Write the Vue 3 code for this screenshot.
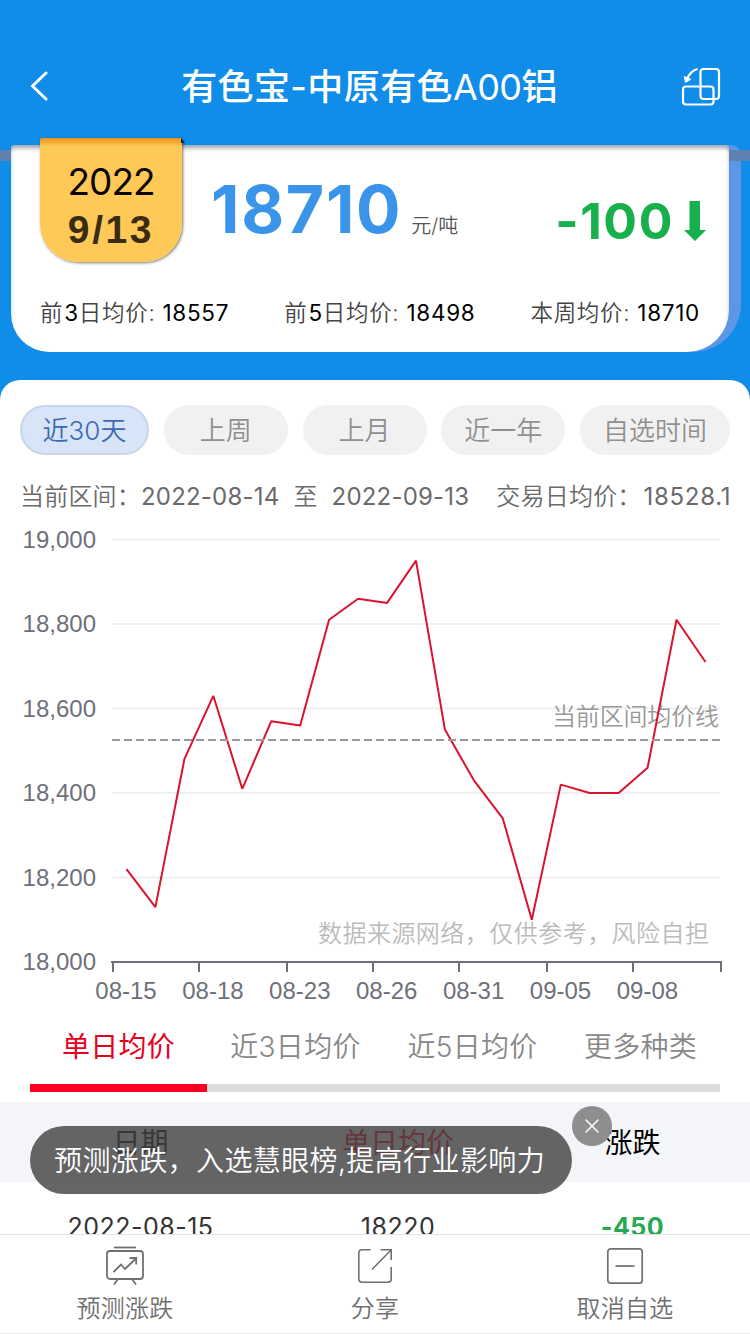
<template>
  <div class="page">
    <header class="nav">
      <button class="nav-btn" aria-label="返回">
        <svg width="20" height="32" viewBox="0 0 20 32" fill="none" stroke="currentColor" stroke-width="3" stroke-linecap="round" stroke-linejoin="round">
          <polyline points="16 2 2.500 15 16 28"/>
        </svg>
      </button>
      <h1 class="nav-title">有色宝-中原有色<span class="latin">A00</span>铝</h1>
      <button class="nav-btn" aria-label="旋转屏幕">
        <svg width="40" height="40" viewBox="0 0 40 40" fill="none" stroke="currentColor" stroke-width="2.2">
          <rect x="19.5" y="2" width="18.5" height="30" rx="3"/>
          <rect x="2" y="19.5" width="30.5" height="18" rx="3"/>
          <path d="M16.5 2C11.500 3.500 8 7 6 12"/>
          <path d="M3.200 9.500L4.600 15.500L9.800 12.200Z" fill="currentColor" stroke-width="1"/>
        </svg>
      </button>
    </header>

    <section class="quote">
      <div class="slot"></div>
      <div class="card-back">
        <div class="card">
          <div class="card-main">
            <div class="date-tag">
              <span class="year">2022</span>
              <span class="day">9/13</span>
            </div>
            <div class="price">18710</div>
            <div class="unit">元/吨</div>
            <div class="change">
              <span>-100</span>
              <svg width="22" height="40" viewBox="0 0 22 40" fill="currentColor">
                <path d="M5.500 0H16V29H22L11 40L0 29H5.500Z"/>
              </svg>
            </div>
          </div>
          <div class="averages">
            <span v-for="a in averages" :key="a.value" class="avg">
              {{ a.pre }}<b v-if="a.days" class="days">{{ a.days }}</b>{{ a.post }} <b>{{ a.value }}</b>
            </span>
          </div>
        </div>
      </div>
    </section>

    <main class="panel">
      <div class="ranges">
        <button
          v-for="(r, i) in ranges"
          :key="r"
          class="range"
          :class="{ active: i === activeRange, wide: i === ranges.length - 1 }"
          @click="activeRange = i"
        >{{ r }}</button>
      </div>

      <div class="interval">
        <span class="cn">当前区间：</span>
        <span class="num">2022-08-14</span>
        <span class="cn to">至</span>
        <span class="num">2022-09-13</span>
        <span class="cn mean">交易日均价：</span>
        <span class="num mean-value">18528.1</span>
      </div>

      <svg class="chart" width="750" height="500" viewBox="0 0 750 500">
        <g v-for="t in yTicks" :key="t">
          <line v-if="t > 18000" x1="112" x2="720" :y1="yPos(t)" :y2="yPos(t)" class="grid"/>
          <text x="96" :y="yPos(t) + 8" text-anchor="end" class="axis-label">{{ t.toLocaleString('en-US') }}</text>
        </g>
        <path :d="axisPath" class="axis"/>
        <text v-for="(d, i) in dates" :key="d" :x="126 + i * 86.900" y="487" text-anchor="middle" class="axis-label">{{ d }}</text>
        <text x="552" y="213" textLength="167" class="mean-label">当前区间均价线</text>
        <text x="318" y="430" textLength="391" class="source">数据来源网络，仅供参考，风险自担</text>
        <polyline :points="linePoints" class="line"/>
        <line x1="112" x2="720" y1="228" y2="228" class="mean-line"/>
      </svg>

      <div class="tabs">
        <button
          v-for="(t, i) in tabs"
          :key="t"
          class="tab"
          :class="{ active: i === activeTab }"
          @click="activeTab = i"
        >{{ t }}</button>
      </div>

      <div class="table">
        <div class="row head">
          <span>日期</span>
          <span class="red">单日均价</span>
          <span>涨跌</span>
        </div>
        <div class="row">
          <span>2022-08-15</span>
          <span>18220</span>
          <span class="down">-450</span>
        </div>
      </div>
    </main>

    <div v-if="showToast" class="toast">
      预测涨跌，入选慧眼榜,提高行业影响力
      <button class="toast-close" aria-label="关闭" @click="showToast = false">
        <svg width="14" height="14" viewBox="0 0 14 14" fill="none" stroke="currentColor" stroke-width="1.500" stroke-linecap="round">
          <path d="M1 1L13 13M13 1L1 13"/>
        </svg>
      </button>
    </div>

    <footer class="toolbar">
      <button class="tool">
        <svg width="40" height="40" viewBox="0 0 40 40" fill="none" stroke="currentColor" stroke-width="1.800">
          <path d="M9 1.500H31"/>
          <rect x="2" y="5" width="36" height="28" rx="3"/>
          <path d="M13 33L9 38.500M27 33L31 38.500"/>
          <path d="M8.500 26L16 18.500L20 23L31 12.500M24.500 12H31.200V18.500"/>
        </svg>
        <span>预测涨跌</span>
      </button>
      <button class="tool share">
        <svg width="40" height="40" viewBox="0 0 40 40" fill="none" stroke="currentColor" stroke-width="1.600">
          <path d="M15.500 3.800H7C5 3.800 3.800 5 3.800 7V33C3.800 35 5 36.200 7 36.200H33C35 36.200 36.200 35 36.200 33V21"/>
          <path d="M17 23.500L36 4M25.500 3.800H36.200V14"/>
        </svg>
        <span>分享</span>
      </button>
      <button class="tool">
        <svg width="40" height="40" viewBox="0 0 40 40" fill="none" stroke="currentColor" stroke-width="1.700">
          <rect x="2.800" y="2.800" width="34.400" height="34.400" rx="3"/>
          <path d="M10.500 20H29.500"/>
        </svg>
        <span>取消自选</span>
      </button>
    </footer>
  </div>
</template>

<script setup>
import { ref, computed } from 'vue'

const averages = [
  { pre: '前', days: 3, post: '日均价:', value: 18557 },
  { pre: '前', days: 5, post: '日均价:', value: 18498 },
  { pre: '本周均价:', days: null, post: '', value: 18710 }
]

const ranges = ['近30天', '上周', '上月', '近一年', '自选时间']
const tabs = ['单日均价', '近3日均价', '近5日均价', '更多种类']
const activeRange = ref(0)
const activeTab = ref(0)
const showToast = ref(true)

const yTicks = [19000, 18800, 18600, 18400, 18200, 18000]
const xTicks = [113, 199, 287, 373, 459, 547, 633, 721]
const dates = ['08-15', '08-18', '08-23', '08-26', '08-31', '09-05', '09-08']
const prices = [
  18220, 18130, 18480, 18630, 18410, 18570, 18560, 18810, 18860, 18850, 18950,
  18550, 18430, 18340, 18100, 18420, 18400, 18400, 18460, 18810, 18710
]

// 18,000 sits on the x axis, 19,000 on the top grid line
function yPos(value) {
  return 450 - (value - 18000) * 0.4225
}

const linePoints = computed(() =>
  prices.map((p, i) => `${(126.5 + i * 28.95).toFixed(1)},${yPos(p).toFixed(1)}`).join(' ')
)

const axisPath = 'M111 450H722' + xTicks.map((x) => `M${x} 450V460`).join('')
</script>

<style>
body {
  margin: 0;
}
</style>

<style scoped>
.page {
  position: relative;
  width: 750px;
  height: 1334px;
  overflow: hidden;
  display: flex;
  flex-direction: column;
  background: #108ce9;
  font-family: Inter, "Noto Sans CJK SC", sans-serif;
  color: #333;
}

button {
  margin: 0;
  padding: 0;
  border: none;
  background: none;
  font: inherit;
  color: inherit;
  white-space: nowrap;
}

svg {
  display: block;
  flex-shrink: 0;
}

.nav {
  box-sizing: border-box;
  height: 145px;
  flex-shrink: 0;
  padding: 28px 29px 0 30px;
  display: flex;
  align-items: center;
  justify-content: space-between;
  color: #fff;
}

.nav-btn {
  width: 40px;
}

.nav-title {
  margin: 0 12px 0 0;
  font-size: 36px;
  font-weight: 500;
  line-height: 50px;
  letter-spacing: 0.4px;
  white-space: nowrap;
}

.latin {
  font-weight: 400;
  letter-spacing: -0.6px;
}

/* quote card */
.quote {
  position: relative;
  height: 235px;
  flex-shrink: 0;
  padding: 0 9px 0 11px;
}

.slot {
  position: absolute;
  left: 0;
  right: 0;
  top: 5px;
  height: 11px;
  background: #5f82b0;
}

.card-back {
  height: 207px;
  padding-right: 12px;
  background: #5b97e4;
  border-radius: 4px 10px 48px 48px;
}

.card {
  position: relative;
  height: 207px;
  background: #fff;
  border-radius: 4px 4px 42px 38px;
  box-shadow: inset 0 4px 4px -1px rgba(60, 70, 90, 0.5);
}

.card-main {
  display: flex;
  height: 140px;
  padding: 0 23px 0 29px;
}

.date-tag {
  position: relative;
  width: 142px;
  height: 124px;
  margin-top: -7px;
  box-sizing: border-box;
  padding-top: 23px;
  display: flex;
  flex-direction: column;
  align-items: center;
  background: linear-gradient(#e8941c, #ffc957 9px);
  border-radius: 2px 2px 38px 38px;
  box-shadow: 1px 1px 3px rgba(70, 60, 40, 0.7);
}

/* folded corner behind the tag */
.date-tag::after {
  content: "";
  position: absolute;
  left: 141px;
  top: 0;
  border-bottom: 5px solid #123;
  border-right: 4px solid transparent;
}

.year {
  font-size: 37px;
  font-weight: 400;
  line-height: 42px;
  letter-spacing: -1px;
  color: #0a0500;
}

.day {
  font-family: "Liberation Sans", sans-serif;
  font-size: 39px;
  font-weight: 700;
  line-height: 54px;
  letter-spacing: 2.6px;
  color: #3a2c12;
}

.price {
  margin: 24px 0 0 29px;
  font-size: 66px;
  font-weight: 700;
  line-height: 80px;
  letter-spacing: 1.7px;
  color: #3a94ea;
}

.unit {
  margin: 66px 0 0 9px;
  font-size: 20px;
  font-weight: 350;
  line-height: 30px;
  color: #555;
}

.change {
  display: flex;
  align-items: center;
  gap: 10px;
  height: 60px;
  margin: 46px 0 0 auto;
  color: #18b04c;
  font-size: 50px;
  font-weight: 700;
  letter-spacing: 1.6px;
}

.averages {
  display: flex;
  justify-content: space-between;
  padding: 12px 29px 0;
}

.avg {
  font-size: 22.5px;
  font-weight: 350;
  line-height: 32px;
  letter-spacing: 0.7px;
  white-space: nowrap;
  color: #444;
}

.avg b {
  font-weight: 400;
  color: #000;
}

.avg .days {
  margin: 0 0 0 1px;
}

/* white panel */
.panel {
  height: 954px;
  flex-shrink: 0;
  background: #fff;
  border-radius: 20px 20px 0 0;
}

.ranges {
  display: flex;
  justify-content: space-between;
  padding: 25px 20px 0;
}

.range {
  box-sizing: border-box;
  width: 124px;
  height: 50px;
  padding-bottom: 4px;
  border-radius: 25px;
  background: #f1f1f1;
  color: #909090;
  font-size: 26px;
  font-weight: 350;
}

.range.active {
  width: 129px;
  background: #d8e4f7;
  border: 2px solid #c8d6ea;
  color: #3a6bb2;
}

.range.wide {
  width: 150px;
}

.interval {
  display: flex;
  align-items: center;
  height: 40px;
  margin-top: 21px;
  padding-left: 20px;
  color: #6a6a6a;
  font-size: 24px;
  white-space: nowrap;
}

.cn {
  margin-top: -4px;
  font-weight: 350;
  letter-spacing: 0.2px;
}

.num {
  letter-spacing: 0.2px;
}

.to {
  margin-left: 14px;
  margin-right: 14px;
}

.mean {
  margin-left: 27px;
  margin-right: 2px;
}

.mean-value {
  letter-spacing: 0.7px;
}

.chart {
  margin-top: -4px;
}

.grid {
  stroke: #eeeff0;
  stroke-width: 2;
}

.axis {
  fill: none;
  stroke: #6e7079;
  stroke-width: 2;
}

.axis-label {
  font-family: "Liberation Sans", sans-serif;
  font-size: 24px;
  fill: #6e7079;
}

.line {
  fill: none;
  stroke: #d8142e;
  stroke-width: 2;
  stroke-linejoin: bevel;
}

.mean-line {
  stroke: #999;
  stroke-width: 2;
  stroke-dasharray: 8 4;
}

.mean-label {
  font-size: 24px;
  font-weight: 350;
  fill: #999;
}

.source {
  font-size: 24px;
  font-weight: 350;
  fill: #bbb;
}

.tabs {
  display: grid;
  grid-template-columns: 177px 177px 177px 159px;
  margin: 0 30px;
  height: 80px;
}

.tab {
  padding-bottom: 6px;
  border-bottom: 8px solid #dcdcdc;
  font-size: 28px;
  font-weight: 350;
  letter-spacing: 0.3px;
  color: #888;
}

.tab.active {
  border-color: #fa0020;
  color: #e6001f;
  font-weight: 400;
}

.table {
  margin-top: 10px;
}

.row {
  display: grid;
  grid-template-columns: 281px 234px 235px;
  align-items: center;
  text-align: center;
  height: 90px;
  font-size: 25px;
  letter-spacing: 0.5px;
}

.head {
  box-sizing: border-box;
  height: 80px;
  padding-bottom: 2px;
  background: #f4f5f8;
  font-size: 28px;
  letter-spacing: 0;
  color: #000;
}

.red {
  color: #e6001f;
}

.down {
  color: #27a853;
  font-weight: 700;
}

/* promo bubble floating over the table */
.toast {
  position: absolute;
  left: 30px;
  top: 1126px;
  box-sizing: border-box;
  width: 542px;
  height: 68px;
  padding-left: 24px;
  border-radius: 34px;
  background: rgba(68, 68, 68, 0.82);
  color: #fff;
  font-size: 28px;
  font-weight: 350;
  line-height: 70px;
  letter-spacing: 0.4px;
  white-space: nowrap;
}

.toast-close {
  position: absolute;
  left: 542px;
  top: -20px;
  width: 40px;
  height: 40px;
  display: flex;
  align-items: center;
  justify-content: center;
  border-radius: 50%;
  background: #8e8e8e;
}

.toolbar {
  position: absolute;
  left: 0;
  right: 0;
  bottom: 0;
  box-sizing: border-box;
  height: 100px;
  display: grid;
  grid-template-columns: repeat(3, 1fr);
  background: #fff;
  border-top: 1px solid #e4e4e4;
  border-bottom: 1px solid #ececec;
}

.tool {
  display: flex;
  flex-direction: column;
  align-items: center;
  padding-top: 11px;
  color: #707070;
  font-size: 24px;
  font-weight: 350;
  line-height: 34px;
  letter-spacing: 0.3px;
}

.tool span {
  margin-top: 6px;
}
</style>
